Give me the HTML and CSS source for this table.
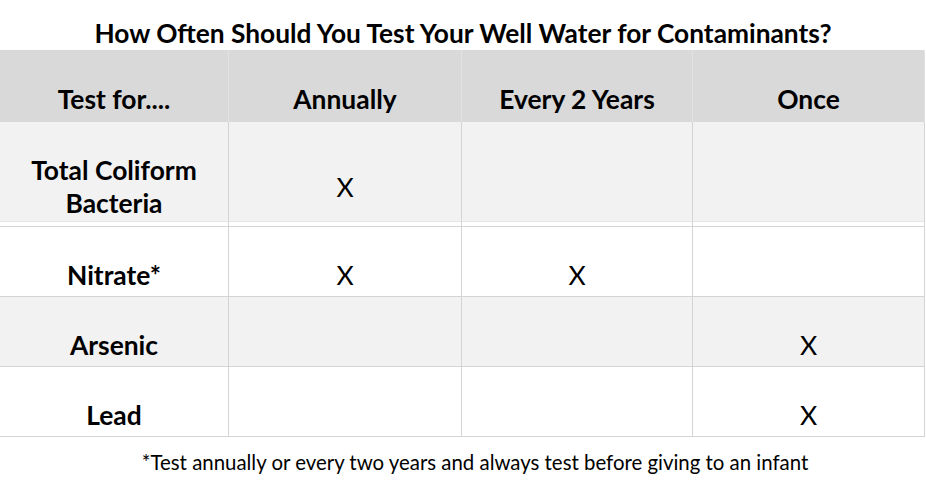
FILE: index.html
```html
<!DOCTYPE html>
<html lang="en">
<head>
<meta charset="utf-8">
<title>How Often Should You Test Your Well Water for Contaminants?</title>
<link rel="stylesheet" href="styles.css">
</head>
<body>
<div class="page">
  <h1 class="title">How Often Should You Test Your Well Water for Contaminants?</h1>
  <div class="table">
    <div class="row row-head">
      <div class="cell">Test for....</div>
      <div class="cell">Annually</div>
      <div class="cell">Every 2 Years</div>
      <div class="cell">Once</div>
    </div>
    <div class="row row-first">
      <div class="cell label">Total Coliform<br>Bacteria</div>
      <div class="cell mark mark-mid">X</div>
      <div class="cell mark"></div>
      <div class="cell mark"></div>
    </div>
    <div class="row">
      <div class="cell label">Nitrate*</div>
      <div class="cell mark">X</div>
      <div class="cell mark">X</div>
      <div class="cell mark"></div>
    </div>
    <div class="row shaded">
      <div class="cell label">Arsenic</div>
      <div class="cell mark"></div>
      <div class="cell mark"></div>
      <div class="cell mark">X</div>
    </div>
    <div class="row">
      <div class="cell label">Lead</div>
      <div class="cell mark"></div>
      <div class="cell mark"></div>
      <div class="cell mark">X</div>
    </div>
  </div>
  <p class="note">*Test annually or every two years and always test before giving to an infant</p>
</div>
</body>
</html>
```
FILE: styles.css
```css
html, body {
  margin: 0;
  padding: 0;
  background: #ffffff;
}

.page {
  width: 926px;
  height: 484px;
  font-family: Lato, "Open Sans", "Liberation Sans", sans-serif;
  color: #000000;
  overflow: hidden;
}

.title {
  margin: 0;
  height: 50px;
  box-sizing: border-box;
  padding-top: 17px;
  font-size: 26.3px;
  line-height: 32px;
  font-weight: 700;
  text-align: center;
}

.table {
  width: 925px;
}

.row {
  display: grid;
  grid-template-columns: 228px 233px 231px 233px;
  height: 70px;
  border-bottom: 1px solid #d4d4d4;
  box-sizing: border-box;
}

.row-head {
  height: 72px;
  background: #d9d9d9;
  border-bottom: none;
}

.row-first {
  height: 105px;
  background: linear-gradient(to top, #ffffff 0 4px, #e6e6e6 4px 5px, #f2f2f2 5px);
}

.shaded {
  background-color: #f2f2f2;
}

.cell {
  display: flex;
  align-items: flex-end;
  justify-content: center;
  text-align: center;
  box-sizing: border-box;
  padding-bottom: 5px;
  font-size: 26.4px;
  line-height: 32px;
  font-weight: 700;
}

.row-head .cell {
  padding-bottom: 7px;
}

.row .cell + .cell {
  border-left: 1px solid #d4d4d4;
}

.row-head .cell + .cell {
  border-left: 1px solid #e2e2e2;
}

.row .cell:last-child {
  border-right: 1px solid #d4d4d4;
}

.row-head .cell:last-child {
  border-right: 1px solid #e2e2e2;
}

.row-first .cell {
  padding-bottom: 6px;
  line-height: 33px;
}

.mark {
  font-weight: 400;
  font-size: 26.5px;
}

.row-first .mark-mid {
  padding-bottom: 22px;
}

.note {
  margin: 0;
  padding-top: 12px;
  padding-left: 24px;
  font-size: 20.4px;
  line-height: 26px;
  text-align: center;
}
```
